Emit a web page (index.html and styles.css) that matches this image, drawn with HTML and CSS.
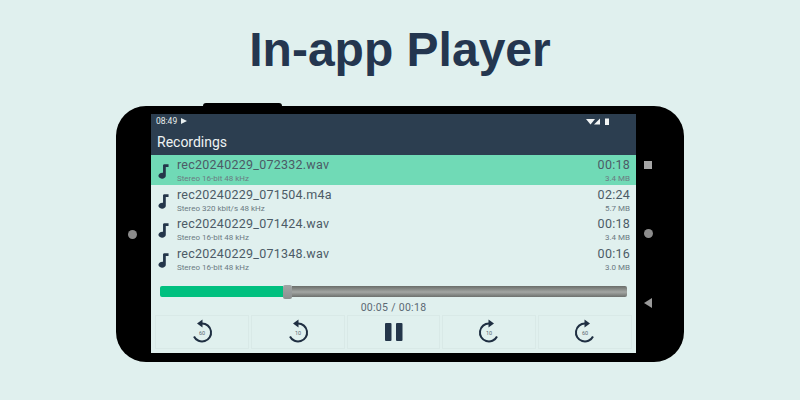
FILE: index.html
```html
<!DOCTYPE html>
<html lang="en">
<head>
    <title>In-app Player</title>
    <meta charset="UTF-8">
    <link rel="stylesheet" href="styles.css">
</head>
<body>
    <h1 class="headline">In-app Player</h1>
    <div class="phone">
        <div class="phone-notch"></div>
        <div class="bezel bezel-left"><span class="camera"></span></div>
        <div class="screen">
            <div class="status-bar">
                <div class="status-left">
                    <span>08:49</span>
                    <svg width="6" height="6" viewBox="0 0 6 6"><path d="M0 0 L6 3 L0 6 Z" fill="#e8eeee"/></svg>
                </div>
                <svg width="24" height="7" viewBox="0 0 24 7">
                    <path d="M0 1 H9 L4.5 6.5 Z" fill="#f2f5f5"/>
                    <path d="M8 6.5 L14 0.5 V6.5 Z" fill="#f2f5f5"/>
                    <rect x="19" y="0.5" width="4" height="6.5" fill="#f2f5f5"/>
                </svg>
            </div>
            <div class="app-bar">Recordings</div>
            <div class="rec-list">
                <div class="rec-row rec-row-active">
                    <svg class="note" width="11" height="16" viewBox="0 0 12 17"><path d="M6.5 1 H11.5 V4 H8.5 V13.5 A4 3.3 0 1 1 5.5 10.4 V2 Z" fill="#24364a"/></svg>
                    <div class="rec-info">
                        <div class="rec-name">rec20240229_072332.wav</div>
                        <div class="rec-meta">Stereo 16-bit 48 kHz</div>
                    </div>
                    <div class="rec-side">
                        <div class="rec-time">00:18</div>
                        <div class="rec-meta">3.4 MB</div>
                    </div>
                </div>
                <div class="rec-row">
                    <svg class="note" width="11" height="16" viewBox="0 0 12 17"><path d="M6.5 1 H11.5 V4 H8.5 V13.5 A4 3.3 0 1 1 5.5 10.4 V2 Z" fill="#24364a"/></svg>
                    <div class="rec-info">
                        <div class="rec-name">rec20240229_071504.m4a</div>
                        <div class="rec-meta">Stereo 320 kbit/s 48 kHz</div>
                    </div>
                    <div class="rec-side">
                        <div class="rec-time">02:24</div>
                        <div class="rec-meta">5.7 MB</div>
                    </div>
                </div>
                <div class="rec-row">
                    <svg class="note" width="11" height="16" viewBox="0 0 12 17"><path d="M6.5 1 H11.5 V4 H8.5 V13.5 A4 3.3 0 1 1 5.5 10.4 V2 Z" fill="#24364a"/></svg>
                    <div class="rec-info">
                        <div class="rec-name">rec20240229_071424.wav</div>
                        <div class="rec-meta">Stereo 16-bit 48 kHz</div>
                    </div>
                    <div class="rec-side">
                        <div class="rec-time">00:18</div>
                        <div class="rec-meta">3.4 MB</div>
                    </div>
                </div>
                <div class="rec-row">
                    <svg class="note" width="11" height="16" viewBox="0 0 12 17"><path d="M6.5 1 H11.5 V4 H8.5 V13.5 A4 3.3 0 1 1 5.5 10.4 V2 Z" fill="#24364a"/></svg>
                    <div class="rec-info">
                        <div class="rec-name">rec20240229_071348.wav</div>
                        <div class="rec-meta">Stereo 16-bit 48 kHz</div>
                    </div>
                    <div class="rec-side">
                        <div class="rec-time">00:16</div>
                        <div class="rec-meta">3.0 MB</div>
                    </div>
                </div>
            </div>
            <div class="seek-bar">
                <div class="seek-done"></div>
                <div class="seek-thumb"></div>
                <div class="seek-rest"></div>
            </div>
            <div class="seek-time">00:05 / 00:18</div>
            <div class="controls">
                <div class="ctrl">
                    <svg width="26" height="26" viewBox="0 0 26 26">
                        <path d="M13 4.5 A9 9 0 1 1 5 17.5" class="ctrl-arc"/>
                        <path d="M13.5 0.5 V8.5 L8 4.5 Z" class="ctrl-head"/>
                        <text x="13" y="15.5" class="ctrl-label">60</text>
                    </svg>
                </div>
                <div class="ctrl">
                    <svg width="26" height="26" viewBox="0 0 26 26">
                        <path d="M13 4.5 A9 9 0 1 1 5 17.5" class="ctrl-arc"/>
                        <path d="M13.5 0.5 V8.5 L8 4.5 Z" class="ctrl-head"/>
                        <text x="13" y="15.5" class="ctrl-label">10</text>
                    </svg>
                </div>
                <div class="ctrl">
                    <svg class="pause" width="20" height="18" viewBox="0 0 20 18">
                        <rect x="1" y="0" width="6.5" height="18" rx="1" fill="#24364a"/>
                        <rect x="12" y="0" width="6.5" height="18" rx="1" fill="#24364a"/>
                    </svg>
                </div>
                <div class="ctrl">
                    <svg width="26" height="26" viewBox="0 0 26 26">
                        <path d="M13 4.5 A9 9 0 1 0 21 17.5" class="ctrl-arc"/>
                        <path d="M12.5 0.5 V8.5 L18 4.5 Z" class="ctrl-head"/>
                        <text x="13" y="15.5" class="ctrl-label">10</text>
                    </svg>
                </div>
                <div class="ctrl">
                    <svg width="26" height="26" viewBox="0 0 26 26">
                        <path d="M13 4.5 A9 9 0 1 0 21 17.5" class="ctrl-arc"/>
                        <path d="M12.5 0.5 V8.5 L18 4.5 Z" class="ctrl-head"/>
                        <text x="13" y="15.5" class="ctrl-label">60</text>
                    </svg>
                </div>
            </div>
        </div>
        <div class="bezel bezel-right">
            <span class="nav-square"></span>
            <span class="camera"></span>
            <svg width="8" height="10" viewBox="0 0 8 10"><path d="M8 0 V10 L0 5 Z" fill="#9a9a9a"/></svg>
        </div>
    </div>
</body>
</html>
```

FILE: styles.css
```css
body {
    margin: 0;
    height: 400px;
    overflow: hidden;
    background-color: #e0f0ee;
    font-family: Roboto, "Liberation Sans", sans-serif;
    display: flex;
    flex-direction: column;
    align-items: center;
}
.headline {
    margin: 21px 0 0;
    height: 85px;
    line-height: 58px;
    font-family: "Liberation Sans", Arial, sans-serif;
    font-size: 48px;
    font-weight: 700;
    color: #24364f;
}
.phone {
    position: relative;
    width: 568px;
    height: 256px;
    background-color: #000;
    border-radius: 30px;
    display: flex;
    align-items: flex-start;
}
.phone-notch {
    position: absolute;
    top: -3px;
    left: 87px;
    width: 79px;
    height: 4px;
    background-color: #000;
    border-radius: 3px 3px 0 0;
}
.bezel {
    height: 100%;
    display: flex;
    flex-direction: column;
    align-items: center;
}
.bezel-left {
    width: 35px;
    padding-right: 3px;
    box-sizing: border-box;
    justify-content: center;
}
.bezel-right {
    width: 48px;
    padding: 55px 24px 0 0;
    box-sizing: border-box;
    gap: 60px;
}
.camera {
    width: 9px;
    height: 9px;
    border-radius: 50%;
    background-color: #8c8c8c;
}
.nav-square {
    width: 8px;
    height: 8px;
    background-color: #a6a6a6;
}
.screen {
    width: 485px;
    height: 239px;
    margin-top: 8px;
    background-color: #e0f0ee;
    display: flex;
    flex-direction: column;
}
.status-bar {
    height: 14px;
    padding: 0 26px 0 5px;
    background-color: #2c3e50;
    color: #e8eeee;
    font-size: 8.5px;
    display: flex;
    justify-content: space-between;
    align-items: center;
}
.status-left {
    display: flex;
    align-items: center;
    gap: 4px;
}
.app-bar {
    height: 27px;
    line-height: 28px;
    padding-left: 6px;
    background-color: #2c3e50;
    color: #eef3f3;
    font-size: 14px;
}
.rec-row {
    height: 29.5px;
    padding: 3px 6px 0 7px;
    box-sizing: border-box;
    display: flex;
    align-items: center;
    color: #4c5b66;
}
.rec-row-active {
    background-color: #70dab6;
}
.note {
    flex: none;
    margin-right: 8px;
}
.rec-info {
    flex: 1;
}
.rec-side {
    text-align: right;
}
.rec-name, .rec-time {
    font-size: 12.5px;
    line-height: 15px;
    letter-spacing: 0.25px;
}
.rec-meta {
    font-size: 8px;
    line-height: 13px;
    color: #6b7a82;
}
.seek-bar {
    height: 11px;
    margin: 13px 9px 0;
    display: flex;
    align-items: center;
}
.seek-done {
    width: 123px;
    height: 11px;
    background-color: #00c07f;
    border-radius: 2px 0 0 2px;
}
.seek-thumb {
    width: 9px;
    height: 14px;
    background: linear-gradient(#a2a5a5, #8b8f8f);
    border-radius: 2px;
}
.seek-rest {
    flex: 1;
    height: 11px;
    background: linear-gradient(#6a6d69, #a3a6a3 55%, #6d706d);
    border-radius: 0 2px 2px 0;
}
.seek-time {
    height: 18px;
    line-height: 21px;
    text-align: center;
    font-size: 10.5px;
    letter-spacing: 0.3px;
    color: #5a6873;
}
.controls {
    display: flex;
    gap: 2px;
    padding: 0 4px;
}
.ctrl {
    flex: 1;
    height: 34px;
    border: 1px solid #d9e9e7;
    box-sizing: border-box;
    display: flex;
    align-items: center;
    justify-content: center;
}
.pause {
    margin-left: 1px;
}
.ctrl-arc {
    fill: none;
    stroke: #1f2f42;
    stroke-width: 2;
}
.ctrl-head {
    fill: #1f2f42;
}
.ctrl-label {
    font-size: 5.5px;
    text-anchor: middle;
    fill: #5a6873;
}
```
